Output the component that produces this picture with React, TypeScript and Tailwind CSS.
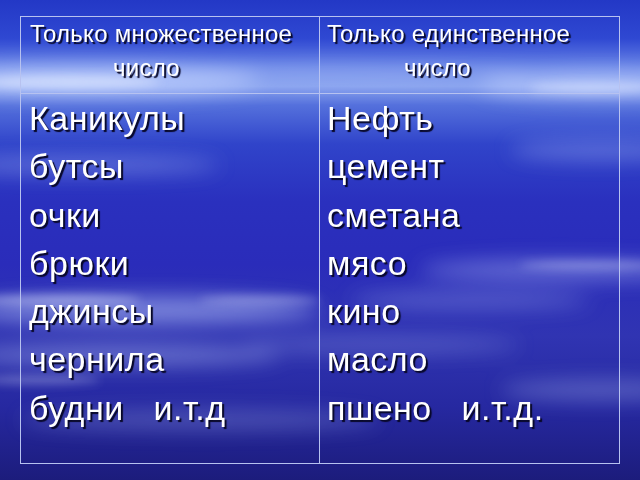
import React from "react";

const left = ["Каникулы", "бутсы", "очки", "брюки", "джинсы", "чернила", "будни\u00a0\u00a0\u00a0и.т.д"];
const right = ["Нефть", "цемент", "сметана", "мясо", "кино", "масло", "пшено\u00a0\u00a0\u00a0и.т.д."];

function Sky() {
  return (
    <svg className="absolute inset-0 h-full w-full" viewBox="0 0 640 480" preserveAspectRatio="none">
      <defs>
        <linearGradient id="base" x1="0" y1="0" x2="0" y2="1">
          <stop offset="0" stopColor="#2338c6" />
          <stop offset="0.08" stopColor="#2f48d2" />
          <stop offset="0.14" stopColor="#6884e6" />
          <stop offset="0.18" stopColor="#86a0ee" />
          <stop offset="0.22" stopColor="#5470dc" />
          <stop offset="0.3" stopColor="#3044ca" />
          <stop offset="0.42" stopColor="#2a30be" />
          <stop offset="0.55" stopColor="#2a2cba" />
          <stop offset="0.7" stopColor="#3034b2" />
          <stop offset="0.85" stopColor="#2628a0" />
          <stop offset="1" stopColor="#1c1c7c" />
        </linearGradient>
        <filter id="blur" x="-20%" y="-50%" width="140%" height="200%">
          <feGaussianBlur stdDeviation="10" />
        </filter>
        <filter id="blur2" x="-20%" y="-50%" width="140%" height="200%">
          <feGaussianBlur stdDeviation="5" />
        </filter>
      </defs>
      <rect width="640" height="480" fill="url(#base)" />
      <g filter="url(#blur)" fill="#c4d4ff">
        <ellipse cx="90" cy="80" rx="170" ry="14" opacity="0.75" />
        <ellipse cx="600" cy="85" rx="120" ry="12" opacity="0.65" />
        <ellipse cx="330" cy="75" rx="200" ry="8" opacity="0.35" />
        <ellipse cx="80" cy="165" rx="140" ry="8" opacity="0.35" />
        <ellipse cx="600" cy="150" rx="90" ry="10" opacity="0.3" />
        <ellipse cx="560" cy="270" rx="140" ry="10" opacity="0.4" />
        <ellipse cx="140" cy="310" rx="180" ry="14" opacity="0.5" />
        <ellipse cx="470" cy="300" rx="120" ry="8" opacity="0.3" />
        <ellipse cx="120" cy="355" rx="160" ry="10" opacity="0.4" />
        <ellipse cx="380" cy="345" rx="140" ry="8" opacity="0.25" />
        <ellipse cx="600" cy="390" rx="100" ry="10" opacity="0.3" />
        <ellipse cx="200" cy="420" rx="180" ry="10" opacity="0.25" />
      </g>
      <g filter="url(#blur2)" fill="#e4ecff">
        <ellipse cx="70" cy="82" rx="90" ry="6" opacity="0.6" />
        <ellipse cx="590" cy="88" rx="60" ry="5" opacity="0.5" />
        <ellipse cx="60" cy="300" rx="80" ry="5" opacity="0.45" />
        <ellipse cx="260" cy="300" rx="60" ry="4" opacity="0.35" />
        <ellipse cx="40" cy="380" rx="60" ry="4" opacity="0.35" />
        <ellipse cx="590" cy="265" rx="70" ry="4" opacity="0.35" />
      </g>
    </svg>
  );
}

export default function App() {
  return (
    <div className="relative h-[480px] w-[640px] overflow-hidden font-['Liberation_Sans',Arial,sans-serif] text-white [text-shadow:2px_2px_1px_#080828]">
      <Sky />
      <div className="relative ml-[20px] mt-[16px] flex h-[448px] w-[600px] flex-col border border-[#b7c2f0]">
        <div className="flex h-[77px] border-b border-[#b7c2f0]">
          <div className="w-[299px] border-r border-[#b7c2f0] pl-[9px] text-[24px] leading-[34px] tracking-[0.25px]">
            <div>Только множественное</div>
            <div className="pl-[83px]">число</div>
          </div>
          <div className="flex-1 pl-[7px] text-[24px] leading-[34px] tracking-[0.25px]">
            <div>Только единственное</div>
            <div className="pl-[77px]">число</div>
          </div>
        </div>
        <div className="flex flex-1">
          <div className="w-[299px] border-r border-[#b7c2f0] pl-[8px] text-[34px] leading-[48.3px] tracking-[0.5px]">
            {left.map((w) => (
              <div key={w}>{w}</div>
            ))}
          </div>
          <div className="flex-1 pl-[7px] text-[34px] leading-[48.3px] tracking-[0.5px]">
            {right.map((w) => (
              <div key={w}>{w}</div>
            ))}
          </div>
        </div>
      </div>
    </div>
  );
}
